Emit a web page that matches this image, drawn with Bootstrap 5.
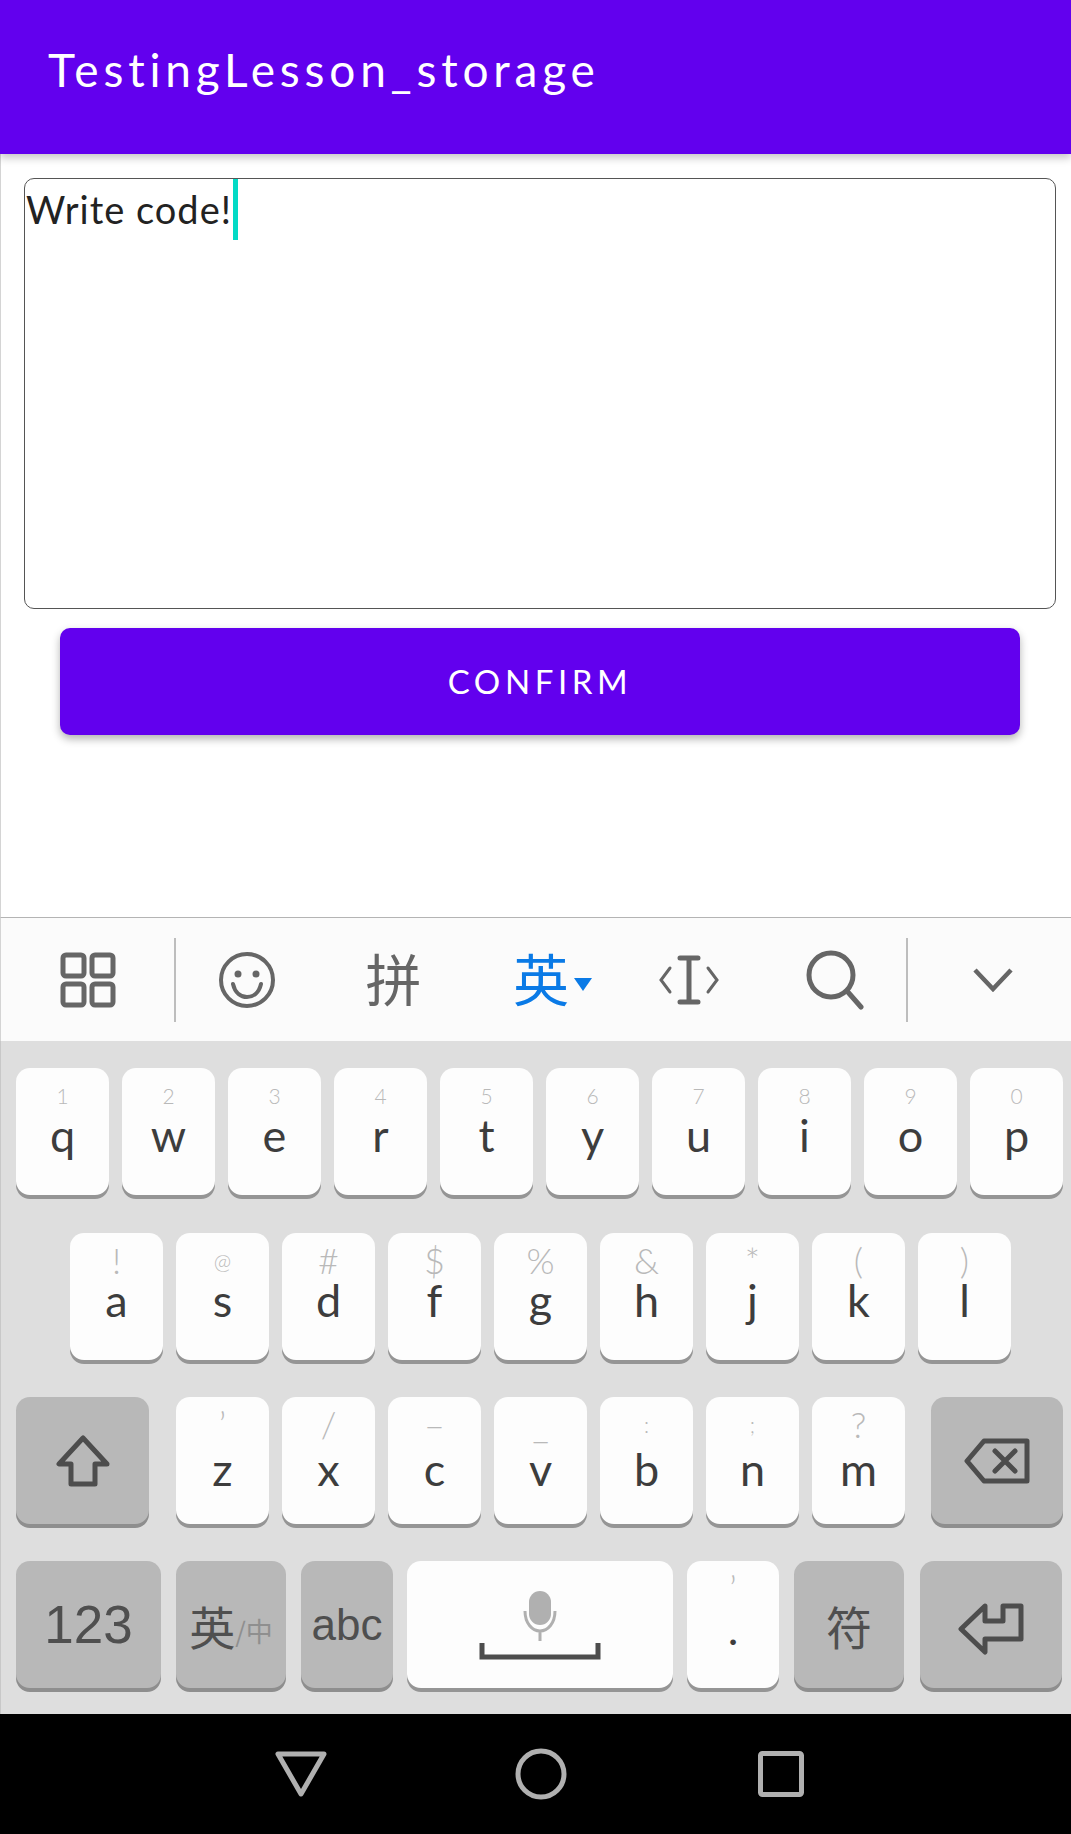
<!doctype html>
<html lang="en"><head><meta charset="utf-8"><title>TestingLesson_storage</title>
<link href="https://cdn.jsdelivr.net/npm/bootstrap@5.3.0/dist/css/bootstrap.min.css" rel="stylesheet">
<style>
html,body{height:100%;margin:0;background:#fff}
body{width:1071px;height:1834px;overflow:hidden;font-family:"Lato","Noto Sans CJK SC",sans-serif}
.app-bar{height:154px;background:#6200EE;color:#fff;padding:0 0 14px 48px;font-size:46px;letter-spacing:4.8px;line-height:1;box-shadow:0 4px 8px rgba(0,0,0,.22);position:relative;z-index:2}
.app-main{flex:1 1 auto;padding:24px 15px 0 23px;border-left:1px solid #d4d4d4}
.note-box{height:431px;border:1px solid #555;border-radius:10px;padding:0 0 0 1px;font-size:38px;line-height:60px;color:#222;letter-spacing:1px;background:#fff}
.note-caret{display:inline-block;width:5px;height:61px;background:#03DAC5;vertical-align:top;margin-left:1px}
.confirm-btn{display:block;width:960px;height:107px;margin:19px 0 0 36px;background:#6200EE;border:0;border-radius:10px;color:#fff;font-size:33px;letter-spacing:4.600px;box-shadow:0 4px 9px rgba(0,0,0,.3)}
.confirm-btn:hover,.confirm-btn:focus{background:#6200EE;color:#fff}
.tool-row{height:124px;background:#FBFBFB;border-top:1px solid #b4b4b4;border-left:1px solid #d4d4d4;color:#666;position:relative}
.tool-slot{height:123px;font-size:56px;font-weight:400;line-height:1}
.tool-rule{position:absolute;top:20px;width:2px;height:84px;background:#bdbdbd}
.blue-mark{color:#0a7ae6;position:relative}
.blue-mark svg{position:absolute;left:calc(100% + 5px);top:26px}
.kb-area{height:673px;background:#DEDEDE;padding:27px 8px 0 15px;border-left:1px solid #c8c8c8}
.kb-row{gap:13px;height:127px;margin-bottom:37px}
.kb-row-first{margin-bottom:38px}
.kb-row-home{padding-left:54px}
.kb-key{width:93px;height:127px;flex:none;background:#FDFDFD;border-radius:14px;box-shadow:0 4px 0 #959595;color:#3d3d3d;font-size:45px;line-height:44px;padding-top:10px}
.kb-hint{height:35px;font-size:21px;line-height:35px;color:#b9b9b9;font-weight:300}
.kb-hint-big{font-size:36px;font-weight:300}
.kb-row-low .kb-hint{height:40px}
.kb-dark{background:#B8B8B8;color:#4f4f4f;font-family:"Liberation Sans",sans-serif;padding-top:0;box-shadow:0 4px 0 #8e8e8e}
.kw-shift{width:133px;margin-right:14px}
.kw-del{width:132px;margin-left:13px}
.kw-num{width:145px;font-size:53px}
.kw-lang{width:110px;margin-left:2px;font-family:"Noto Sans CJK SC",sans-serif;font-size:46px}
.kw-abc{width:92px;margin-left:2px;font-size:44px}
.kw-space{width:266px;margin-left:1px;padding-top:0}
.kw-dot{width:92px;margin-left:1px}
.kw-sym{width:110px;margin-left:2px;font-family:"Noto Sans CJK SC",sans-serif;font-size:46px}
.kw-enter{width:142px;margin-left:3px;padding-top:8px}
.lang-sub{font-size:27px;color:#8f8f8f;padding-top:12px}
.sys-bar{height:120px;background:#000;padding-left:10px}
.sys-slot{width:240px}
</style></head>
<body class="d-flex flex-column">
<header class="app-bar d-flex align-items-center flex-shrink-0">TestingLesson_storage</header>
<main class="app-main">
  <div class="note-box">Write code!<span class="note-caret"></span></div>
  <button type="button" class="btn confirm-btn text-uppercase">Confirm</button>
</main>
<div class="tool-row d-flex flex-shrink-0">
  <div class="tool-slot d-flex align-items-center justify-content-center" style="width:173px"><svg width="56" height="56" viewBox="0 0 56 56" fill="none" stroke="#666" stroke-width="5"><rect x="3" y="3" width="21" height="21" rx="3"/><rect x="32" y="3" width="21" height="21" rx="3"/><rect x="3" y="32" width="21" height="21" rx="3"/><rect x="32" y="32" width="21" height="21" rx="3"/></svg></div>
  <div class="tool-slot d-flex align-items-center justify-content-center" style="width:146px"><svg width="58" height="58" viewBox="0 0 58 58" fill="none" stroke="#666"><circle cx="29" cy="29" r="26" stroke-width="4"/><circle cx="20" cy="23" r="3.5" fill="#666" stroke="none"/><circle cx="38" cy="23" r="3.5" fill="#666" stroke="none"/><path d="M15 33c2 9 8 13 14 13s12-4 14-13" stroke-width="4" stroke-linecap="round"/></svg></div>
  <div class="tool-slot d-flex align-items-center justify-content-center" style="width:147px">拼</div>
  <div class="tool-slot d-flex align-items-center justify-content-center" style="width:148px"><span class="blue-mark">英<svg width="18" height="13" viewBox="0 0 18 13"><path d="M0 0h18L9 13z" fill="#0a7ae6"/></svg></span></div>
  <div class="tool-slot d-flex align-items-center justify-content-center" style="width:148px"><svg width="60" height="50" viewBox="0 0 60 50" fill="none" stroke="#666" stroke-linecap="round"><path d="M11 13 2 25l9 12M49 13l9 12-9 12" stroke-width="3"/><path d="M30 3v44M21 3h18M21 47h18" stroke-width="5"/></svg></div>
  <div class="tool-slot d-flex align-items-center justify-content-center" style="width:144px"><svg width="58" height="60" viewBox="0 0 58 60" fill="none" stroke="#666" stroke-width="5" stroke-linecap="round"><circle cx="25" cy="25" r="22"/><path d="M41 41l14 16"/></svg></div>
  <div class="tool-slot d-flex align-items-center justify-content-center ps-2" style="width:164px"><svg width="40" height="24" viewBox="0 0 40 24" fill="none" stroke="#666" stroke-width="4.500"><path d="M2 2l18 19L38 2"/></svg></div>
  <span class="tool-rule" style="left:173px"></span><span class="tool-rule" style="left:905px"></span>
</div>
<section class="kb-area flex-shrink-0">
  <div class="kb-row kb-row-first d-flex">
    <div class="kb-key text-center"><div class="kb-hint">1</div>q</div>
    <div class="kb-key text-center"><div class="kb-hint">2</div>w</div>
    <div class="kb-key text-center"><div class="kb-hint">3</div>e</div>
    <div class="kb-key text-center"><div class="kb-hint">4</div>r</div>
    <div class="kb-key text-center"><div class="kb-hint">5</div>t</div>
    <div class="kb-key text-center"><div class="kb-hint">6</div>y</div>
    <div class="kb-key text-center"><div class="kb-hint">7</div>u</div>
    <div class="kb-key text-center"><div class="kb-hint">8</div>i</div>
    <div class="kb-key text-center"><div class="kb-hint">9</div>o</div>
    <div class="kb-key text-center"><div class="kb-hint">0</div>p</div>
  </div>
  <div class="kb-row kb-row-home d-flex">
    <div class="kb-key text-center"><div class="kb-hint kb-hint-big">!</div>a</div>
    <div class="kb-key text-center"><div class="kb-hint">@</div>s</div>
    <div class="kb-key text-center"><div class="kb-hint kb-hint-big">#</div>d</div>
    <div class="kb-key text-center"><div class="kb-hint kb-hint-big">$</div>f</div>
    <div class="kb-key text-center"><div class="kb-hint kb-hint-big">%</div>g</div>
    <div class="kb-key text-center"><div class="kb-hint kb-hint-big">&amp;</div>h</div>
    <div class="kb-key text-center"><div class="kb-hint kb-hint-big">*</div>j</div>
    <div class="kb-key text-center"><div class="kb-hint kb-hint-big">(</div>k</div>
    <div class="kb-key text-center"><div class="kb-hint kb-hint-big">)</div>l</div>
  </div>
  <div class="kb-row kb-row-low d-flex">
    <div class="kb-key kb-dark kw-shift d-flex align-items-center justify-content-center"><svg width="56" height="52" viewBox="0 0 56 52" fill="none" stroke="#4d4d4d" stroke-width="5" stroke-linejoin="round"><path d="M28 3 4 29h12v20h24V29h12z"/></svg></div>
    <div class="kb-key text-center"><div class="kb-hint kb-hint-big">’</div>z</div>
    <div class="kb-key text-center"><div class="kb-hint kb-hint-big">/</div>x</div>
    <div class="kb-key text-center"><div class="kb-hint kb-hint-big">–</div>c</div>
    <div class="kb-key text-center"><div class="kb-hint kb-hint-big">_</div>v</div>
    <div class="kb-key text-center"><div class="kb-hint">:</div>b</div>
    <div class="kb-key text-center"><div class="kb-hint">;</div>n</div>
    <div class="kb-key text-center"><div class="kb-hint kb-hint-big">?</div>m</div>
    <div class="kb-key kb-dark kw-del d-flex align-items-center justify-content-center"><svg width="66" height="46" viewBox="0 0 66 46" fill="none" stroke="#4d4d4d" stroke-width="5" stroke-linejoin="round"><path d="M20 3h43v40H20L3 23z"/><path d="M31 13l20 20M51 13 31 33" stroke-linecap="round"/></svg></div>
  </div>
  <div class="kb-row d-flex">
    <div class="kb-key kb-dark kw-num d-flex align-items-center justify-content-center">123</div>
    <div class="kb-key kb-dark kw-lang d-flex align-items-center justify-content-center">英<span class="lang-sub">/中</span></div>
    <div class="kb-key kb-dark kw-abc d-flex align-items-center justify-content-center">abc</div>
    <div class="kb-key kw-space d-flex align-items-center justify-content-center"><svg width="122" height="72" viewBox="0 0 122 72"><rect x="50" y="2" width="22" height="34" rx="11" fill="#b0b0b0"/><path d="M46 22c0 12 7 20 15 20s15-8 15-20M61 42v10" fill="none" stroke="#b0b0b0" stroke-width="3"/><path d="M3 54v14h116V54" fill="none" stroke="#4d4d4d" stroke-width="5"/></svg></div>
    <div class="kb-key kw-dot text-center"><div class="kb-hint kb-hint-big">’</div>.</div>
    <div class="kb-key kb-dark kw-sym d-flex align-items-center justify-content-center">符</div>
    <div class="kb-key kb-dark kw-enter d-flex align-items-center justify-content-center"><svg width="66" height="52" viewBox="0 0 66 52" fill="none" stroke="#4d4d4d" stroke-width="5" stroke-linejoin="round"><path d="M27 3 3 26l24 23V36h36V3H45v15H27z"/></svg></div>
  </div>
</section>
<footer class="sys-bar d-flex justify-content-center align-items-center flex-shrink-0">
  <div class="sys-slot d-flex justify-content-center"><svg width="52" height="46" viewBox="0 0 52 46" fill="none" stroke="#b0b0b0" stroke-width="5" stroke-linejoin="round"><path d="M3 3h46L26 43z"/></svg></div>
  <div class="sys-slot d-flex justify-content-center"><svg width="52" height="52" viewBox="0 0 52 52" fill="none" stroke="#b0b0b0" stroke-width="5"><circle cx="26" cy="26" r="23"/></svg></div>
  <div class="sys-slot d-flex justify-content-center"><svg width="46" height="46" viewBox="0 0 46 46" fill="none" stroke="#b0b0b0" stroke-width="5" stroke-linejoin="round"><rect x="2.500" y="2.500" width="41" height="41" rx="2"/></svg></div>
</footer>
<script src="https://cdn.jsdelivr.net/npm/bootstrap@5.3.0/dist/js/bootstrap.bundle.min.js"></script>
</body></html>
